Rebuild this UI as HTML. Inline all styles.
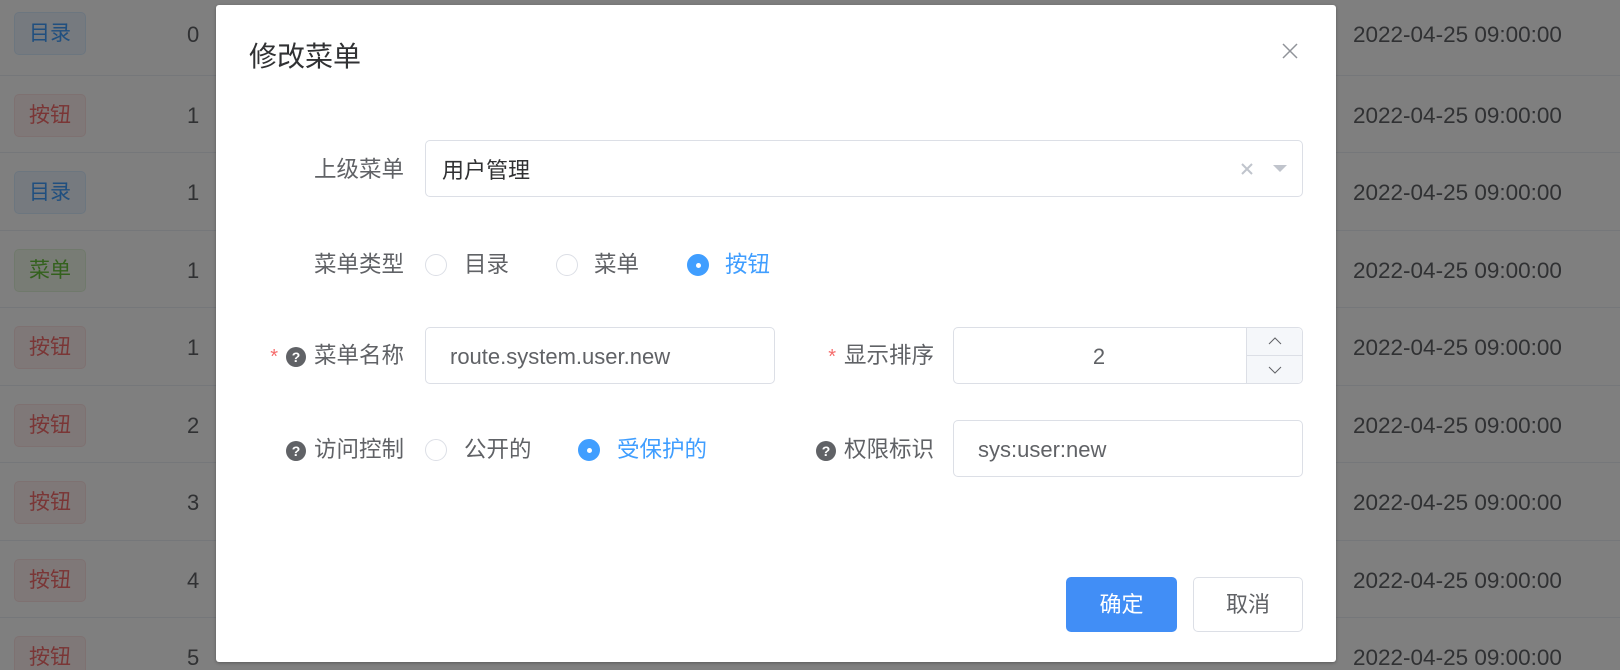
<!DOCTYPE html>
<html><head><meta charset="utf-8"><style>
*{box-sizing:border-box;margin:0;padding:0}
html,body{width:1620px;height:670px;overflow:hidden}
body{position:relative;background:#fff;font-family:"Liberation Sans","Noto Sans CJK SC",sans-serif;color:#606266}
.row{position:absolute;left:0;width:1620px;height:77.5px;border-bottom:1px solid #ebeef5}
.tag{position:absolute;left:14px;width:72px;height:43px;border-radius:5px;font-size:21px;line-height:41px;text-align:center;border:1px solid}
.t-b{background:#ecf5ff;border-color:#d9ecff;color:#409eff}
.t-r{background:#fef0f0;border-color:#fde2e2;color:#f56c6c}
.t-g{background:#f0f9eb;border-color:#e1f3d8;color:#67c23a}
.num{position:absolute;left:187px;font-size:22px;line-height:26px}
.date{position:absolute;left:1353px;font-size:22.5px;line-height:26px;color:#606266}
.ov{position:fixed;left:0;top:0;width:1620px;height:670px;background:rgba(0,0,0,.5)}
.dlg{position:fixed;left:216px;top:5px;width:1120px;height:657px;background:#fff;border-radius:3px;box-shadow:0 1px 3px rgba(0,0,0,.3)}
.a{position:absolute}
.lbl{position:absolute;font-size:22.5px;line-height:26px;color:#606266;white-space:nowrap;text-align:right}
.inp{position:absolute;border:1px solid #dcdfe6;border-radius:5px;background:#fff;font-size:22px;line-height:26px;color:#606266}
.rad{position:absolute;width:22px;height:22px;border-radius:50%;border:1px solid #dcdfe6;background:#fff}
.rad.on{background:#409eff;border-color:#409eff}
.rad.on::after{content:"";position:absolute;left:7.5px;top:7.5px;width:5px;height:5px;border-radius:50%;background:#fff}
.rt{position:absolute;font-size:22.5px;line-height:26px;color:#606266;white-space:nowrap}
.rt.on{color:#409eff}
.q{display:inline-block;width:20px;height:20px;border-radius:50%;background:#606266;color:#fff;font-size:14px;font-weight:bold;line-height:20px;text-align:center;vertical-align:1px;margin-right:8px}
.st{color:#f56c6c;margin-right:8px;font-size:20px}
</style></head><body>
<div class="row" style="top:-2px"><div class="tag t-b" style="top:14px">目录</div><div class="num" style="top:24px">0</div><div class="date" style="top:24px">2022-04-25 09:00:00</div></div>
<div class="row" style="top:75.5px"><div class="tag t-r" style="top:18px">按钮</div><div class="num" style="top:27px">1</div><div class="date" style="top:27px">2022-04-25 09:00:00</div></div>
<div class="row" style="top:153px"><div class="tag t-b" style="top:18px">目录</div><div class="num" style="top:27px">1</div><div class="date" style="top:27px">2022-04-25 09:00:00</div></div>
<div class="row" style="top:230.5px"><div class="tag t-g" style="top:18px">菜单</div><div class="num" style="top:27px">1</div><div class="date" style="top:27px">2022-04-25 09:00:00</div></div>
<div class="row" style="top:308px"><div class="tag t-r" style="top:18px">按钮</div><div class="num" style="top:27px">1</div><div class="date" style="top:27px">2022-04-25 09:00:00</div></div>
<div class="row" style="top:385.5px"><div class="tag t-r" style="top:18px">按钮</div><div class="num" style="top:27px">2</div><div class="date" style="top:27px">2022-04-25 09:00:00</div></div>
<div class="row" style="top:463px"><div class="tag t-r" style="top:18px">按钮</div><div class="num" style="top:27px">3</div><div class="date" style="top:27px">2022-04-25 09:00:00</div></div>
<div class="row" style="top:540.5px"><div class="tag t-r" style="top:18px">按钮</div><div class="num" style="top:27px">4</div><div class="date" style="top:27px">2022-04-25 09:00:00</div></div>
<div class="row" style="top:618px"><div class="tag t-r" style="top:18px">按钮</div><div class="num" style="top:27px">5</div><div class="date" style="top:27px">2022-04-25 09:00:00</div></div>
<div class="ov"></div>
<div class="dlg">
 <div class="a" style="left:33px;top:36px;font-size:28px;line-height:32px;color:#303133">修改菜单</div>
 <svg class="a" style="left:1066px;top:38px" width="16" height="16" viewBox="0 0 16 16"><path d="M1 1L15 15M15 1L1 15" stroke="#909399" stroke-width="1.5"/></svg>

 <div class="lbl" style="right:932px;top:152px">上级菜单</div>
 <div class="inp" style="left:209px;top:135px;width:878px;height:57px"><span class="a" style="left:16px;top:17px;color:#303133">用户管理</span>
  <svg class="a" style="left:815px;top:22px" width="12" height="12" viewBox="0 0 12 12"><path d="M1 1L11 11M11 1L1 11" stroke="#c0c4cc" stroke-width="2"/></svg>
  <svg class="a" style="left:847px;top:24px" width="14" height="8" viewBox="0 0 14 8"><path d="M0 0H14L7 7Z" fill="#c0c4cc"/></svg>
 </div>

 <div class="lbl" style="right:932px;top:247px">菜单类型</div>
 <div class="rad" style="left:209px;top:249px"></div><div class="rt" style="left:248px;top:247px">目录</div>
 <div class="rad" style="left:340px;top:249px"></div><div class="rt" style="left:378px;top:247px">菜单</div>
 <div class="rad on" style="left:471px;top:249px"></div><div class="rt on" style="left:509px;top:247px">按钮</div>

 <div class="lbl" style="right:932px;top:338px"><span class="st">*</span><span class="q">?</span>菜单名称</div>
 <div class="inp" style="left:209px;top:322px;width:350px;height:57px"><span class="a" style="left:24px;top:16px">route.system.user.new</span></div>
 <div class="lbl" style="right:402px;top:338px"><span class="st">*</span>显示排序</div>
 <div class="inp" style="left:737px;top:322px;width:350px;height:57px"><span class="a" style="left:0;width:290px;text-align:center;top:16px">2</span>
  <div class="a" style="left:292px;top:0;width:56px;height:55px;background:#f5f7fa;border-left:1px solid #dcdfe6;border-radius:0 5px 5px 0"><div class="a" style="left:0;top:27px;width:56px;border-top:1px solid #dcdfe6"></div>
  <svg class="a" style="left:21px;top:9px" width="14" height="8" viewBox="0 0 14 8"><path d="M1 7L7 1L13 7" stroke="#606266" fill="none" stroke-width="1"/></svg>
  <svg class="a" style="left:21px;top:38px" width="14" height="8" viewBox="0 0 14 8"><path d="M1 1L7 7L13 1" stroke="#606266" fill="none" stroke-width="1"/></svg></div>
 </div>

 <div class="lbl" style="right:932px;top:432px"><span class="q">?</span>访问控制</div>
 <div class="rad" style="left:209px;top:434px"></div><div class="rt" style="left:248px;top:432px">公开的</div>
 <div class="rad on" style="left:362px;top:434px"></div><div class="rt on" style="left:401px;top:432px">受保护的</div>
 <div class="lbl" style="right:402px;top:432px"><span class="q">?</span>权限标识</div>
 <div class="inp" style="left:737px;top:415px;width:350px;height:57px"><span class="a" style="left:24px;top:16px">sys:user:new</span></div>

 <div class="a" style="left:850px;top:572px;width:111px;height:55px;background:#418ef6;border-radius:5px;color:#fff;font-size:22px;text-align:center;line-height:55px">确定</div>
 <div class="a" style="left:977px;top:572px;width:110px;height:55px;background:#fff;border:1px solid #dcdfe6;border-radius:5px;color:#606266;font-size:22px;text-align:center;line-height:53px">取消</div>
</div>
</body></html>
